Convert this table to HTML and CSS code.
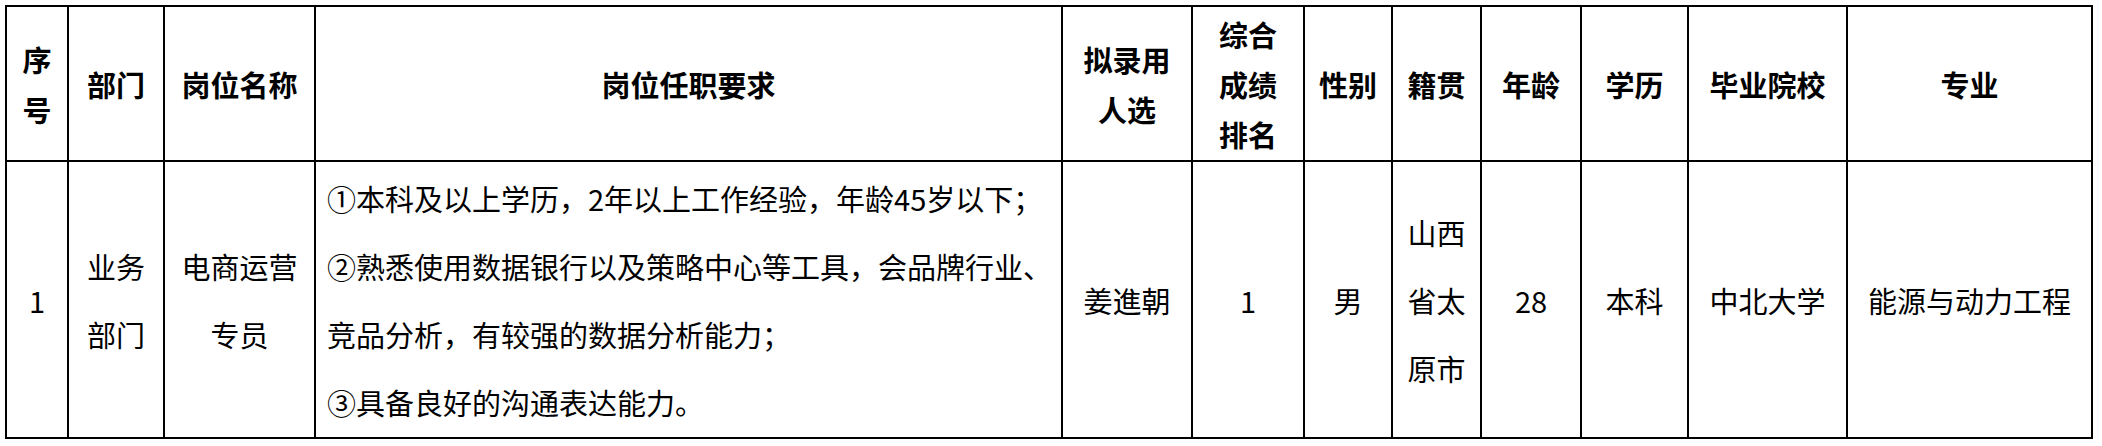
FILE: index.html
```html
<!DOCTYPE html>
<html lang="zh-CN">
<head>
<meta charset="utf-8">
<title>拟录用人员公示</title>
<link rel="stylesheet" href="styles.css">
</head>
<body>
<div class="sheet">
  <div class="cell head">序号</div>
  <div class="cell head">部门</div>
  <div class="cell head">岗位名称</div>
  <div class="cell head">岗位任职要求</div>
  <div class="cell head">拟录用人选</div>
  <div class="cell head">综合成绩排名</div>
  <div class="cell head">性别</div>
  <div class="cell head">籍贯</div>
  <div class="cell head">年龄</div>
  <div class="cell head">学历</div>
  <div class="cell head">毕业院校</div>
  <div class="cell head">专业</div>

  <div class="cell">1</div>
  <div class="cell">业务部门</div>
  <div class="cell">电商运营专员</div>
  <div class="cell req">
    <p class="line">①本科及以上学历，2年以上工作经验，年龄45岁以下；</p>
    <p class="line">②熟悉使用数据银行以及策略中心等工具，会品牌行业、</p>
    <p class="line">竞品分析，有较强的数据分析能力；</p>
    <p class="line">③具备良好的沟通表达能力。</p>
  </div>
  <div class="cell">姜進朝</div>
  <div class="cell">1</div>
  <div class="cell">男</div>
  <div class="cell">山西省太原市</div>
  <div class="cell">28</div>
  <div class="cell">本科</div>
  <div class="cell">中北大学</div>
  <div class="cell">能源与动力工程</div>
</div>
</body>
</html>
```

FILE: styles.css
```css
html, body {
  background: #ffffff;
}

body {
  margin: 5px;
  font-family: "Noto Sans CJK SC", "Microsoft YaHei", "Noto Sans", sans-serif;
  color: #000000;
}

.sheet {
  display: grid;
  grid-template-columns: 62px 96px 151px 747px 130px 112px 88px 89px 100px 107px 159px 245px;
  grid-template-rows: 155px 277px;
  width: max-content;
  border-left: 2px solid #000;
  border-top: 2px solid #000;
}

.cell {
  box-sizing: border-box;
  border-right: 2px solid #000;
  border-bottom: 2px solid #000;
  padding: 0 14px;
  display: flex;
  flex-direction: column;
  justify-content: center;
  align-items: center;
  text-align: center;
  font-size: 29px;
  line-height: 68px;
  font-weight: 400;
}

.head {
  font-weight: 700;
  line-height: 50px;
}

.req {
  align-items: flex-start;
  text-align: left;
  padding: 0 11px;
}

.line {
  margin: 0;
  white-space: nowrap;
}
```
